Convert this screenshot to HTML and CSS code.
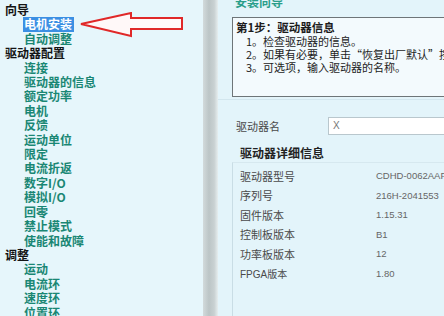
FILE: index.html
```html
<!DOCTYPE html>
<html lang="zh">
<head>
<meta charset="utf-8">
<link rel="stylesheet" href="styles.css">
</head>
<body>
<div class="app">
  <nav class="tree">
    <div class="hdr">向导</div>
    <div class="item sel"><span>电机安装</span></div>
    <div class="item">自动调整</div>
    <div class="hdr">驱动器配置</div>
    <div class="item">连接</div>
    <div class="item">驱动器的信息</div>
    <div class="item">额定功率</div>
    <div class="item">电机</div>
    <div class="item">反馈</div>
    <div class="item">运动单位</div>
    <div class="item">限定</div>
    <div class="item">电流折返</div>
    <div class="item">数字I/O</div>
    <div class="item">模拟I/O</div>
    <div class="item">回零</div>
    <div class="item">禁止模式</div>
    <div class="item">使能和故障</div>
    <div class="hdr">调整</div>
    <div class="item">运动</div>
    <div class="item">电流环</div>
    <div class="item">速度环</div>
    <div class="item">位置环</div>
    <svg class="arrow" width="106" height="30" viewBox="0 0 106 30">
      <polygon points="2,12 52,1 52,6 103,6 103,17 52,17 52,24" fill="#fff8f8" stroke="#e02828" stroke-width="2" stroke-linejoin="miter"/>
    </svg>
  </nav>
  <div class="splitter"></div>
  <main class="pane">
    <div class="title">安装向导</div>
    <div class="stepbox">
      <div class="step-h">第1步：驱动器信息</div>
      <div class="step-l">1。检查驱动器的信息。</div>
      <div class="step-l">2。如果有必要，单击“恢复出厂默认”按钮。</div>
      <div class="step-l">3。可选项，输入驱动器的名称。</div>
    </div>
    <div class="sep"></div>
    <div class="namerow">
      <span class="lbl">驱动器名</span>
      <div class="input">X</div>
    </div>
    <div class="group-t">驱动器详细信息</div>
    <div class="group">
      <div class="row"><span class="lbl">驱动器型号</span><span class="val">CDHD-0062AAP1</span></div>
      <div class="row"><span class="lbl">序列号</span><span class="val">216H-2041553</span></div>
      <div class="row"><span class="lbl">固件版本</span><span class="val">1.15.31</span></div>
      <div class="row"><span class="lbl">控制板版本</span><span class="val">B1</span></div>
      <div class="row"><span class="lbl">功率板版本</span><span class="val">12</span></div>
      <div class="row"><span class="lbl small">FPGA版本</span><span class="val">1.80</span></div>
    </div>
  </main>
</div>
</body>
</html>
```
FILE: styles.css
```css
html, body {
  margin: 0;
  padding: 0;
  width: 444px;
  height: 316px;
  overflow: hidden;
  font-family: "Liberation Sans", "Noto Sans CJK SC", sans-serif;
}
.app {
  display: flex;
  width: 444px;
  height: 316px;
  overflow: hidden;
}
.tree {
  position: relative;
  width: 203px;
  flex: none;
  background: #e6f6fb;
  padding-top: 3px;
  box-sizing: border-box;
  font-size: 12px;
  line-height: 14.4px;
  font-weight: bold;
}
.hdr {
  padding-left: 5px;
  color: #141414;
  font-family: "Noto Sans CJK SC", sans-serif;
}
.item {
  padding-left: 24px;
  color: #1a8774;
  font-family: "Noto Sans CJK SC", sans-serif;
}
.item.sel span {
  display: inline-block;
  background: #3b8fe3;
  color: #ffffff;
  padding: 0 2px 0 1px;
  margin-left: -1px;
}
.arrow {
  position: absolute;
  left: 79px;
  top: 12px;
}
.splitter {
  width: 15px;
  flex: none;
  background: linear-gradient(to right, #d2dadb 0, #bcc5c6 40%, #c9d1d2 75%, #e6eeef 100%);
}
.pane {
  flex: 1;
  background: #e3f4fa;
  padding-left: 14px;
  overflow: hidden;
  font-family: "Noto Sans CJK SC", sans-serif;
}
.title {
  margin-top: -5px;
  margin-left: 3px;
  font-size: 12px;
  line-height: 14px;
  color: #2a9e8a;
  font-weight: bold;
}
.stepbox {
  margin-top: 8px;
  width: 240px;
  height: 80px;
  border: 1px solid #6e7578;
  border-right: none;
  background: #f3fafd;
  padding: 2px 0 0 3px;
  box-sizing: border-box;
  font-size: 11px;
  line-height: 13px;
  color: #1c1c1c;
}
.step-h {
  font-weight: bold;
  font-size: 11.5px;
  line-height: 15px;
}
.step-l {
  padding-left: 10px;
  white-space: nowrap;
}
.sep {
  margin-top: 2px;
  margin-left: -14px;
  height: 1px;
  background: #d2e6ee;
}
.namerow {
  display: flex;
  align-items: center;
  margin-top: 17px;
  padding-left: 4px;
}
.lbl {
  font-size: 11px;
  color: #4a4a4a;
  width: 136px;
  flex: none;
}
.namerow .lbl {
  width: 92px;
}
.input {
  flex: 1;
  height: 16px;
  border: 1px solid #b9c7cd;
  border-right: none;
  background: #ffffff;
  font-family: "Liberation Sans", sans-serif;
  font-size: 10px;
  line-height: 16px;
  color: #777;
  padding-left: 4px;
}
.group-t {
  margin-top: 10px;
  padding-left: 8px;
  font-size: 12px;
  line-height: 16px;
  font-weight: bold;
  color: #222;
}
.group {
  margin-top: 1px;
  border-left: 1px solid #c9dde5;
  border-top: 1px solid #d6e8ef;
  padding: 3px 0 0 7px;
  height: 160px;
}
.row {
  display: flex;
  align-items: center;
  height: 19.5px;
  white-space: nowrap;
}
.lbl.small {
  font-family: "Liberation Sans", "Noto Sans CJK SC", sans-serif;
  font-size: 10px;
}
.val {
  font-family: "Liberation Sans", sans-serif;
  font-size: 9.5px;
  color: #666;
}
```
